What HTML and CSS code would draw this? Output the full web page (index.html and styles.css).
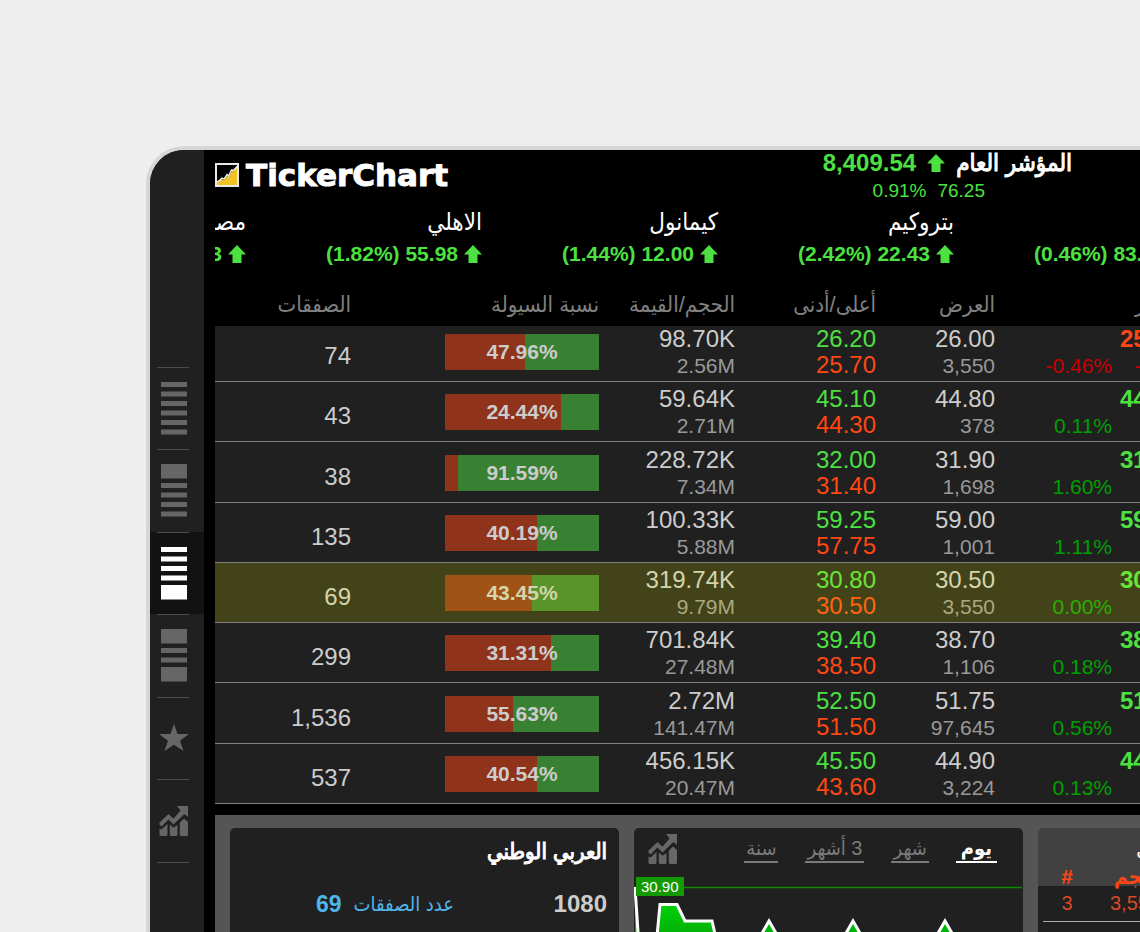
FILE: index.html
```html
<!DOCTYPE html>
<html lang="ar">
<head>
    <meta charset="UTF-8">
    <title>TickerChart</title>
    <link rel="stylesheet" href="styles.css">
</head>
<body>
    <svg class="symbols" width="0" height="0">
        <symbol id="up" viewBox="0 0 18 18">
            <path fill="#4de041" d="M9 0 L18 9.5 H13.5 V18 H4.5 V9.5 H0 Z"/>
        </symbol>
        <symbol id="growth" viewBox="0 0 30 30">
            <path fill="currentColor" d="M18 0 H29 V11 L25.500 8 L14.500 18.500 L9.500 13.500 L2.500 20.500 L0.500 18.500 V16.500 L9.500 8 L14.500 12.800 L21.500 4.500 Z"/>
            <path fill="currentColor" d="M0.500 22.500 L2.500 23.500 L8.500 18 V28.500 Q8.500 30 7 30 H2 Q0.500 30 0.500 28.500 Z M10.800 18.500 L14.500 21.800 L18.500 19 V28.500 Q18.500 30 17 30 H12.300 Q10.800 30 10.800 28.500 Z M20.800 16.500 L25 12.500 L29 16 V28.500 Q29 30 27.500 30 H22.300 Q20.800 30 20.800 28.500 Z"/>
        </symbol>
    </svg>

    <div class="app">
        <nav class="sidebar">
            <a href="#list" aria-label="List">
                <svg width="26" height="53"><path d="M0 0h26v5H0z M0 9.500h26v5H0z M0 19h26v5H0z M0 28.500h26v5H0z M0 38h26v5H0z M0 47.500h26v5H0z"/></svg>
            </a>
            <a href="#top" aria-label="Top panel">
                <svg width="26" height="53"><path d="M0 0h26v14.500H0z M0 19h26v5H0z M0 28.500h26v5H0z M0 38h26v5H0z M0 47.500h26v5H0z"/></svg>
            </a>
            <a href="#bottom" class="active" aria-label="Bottom panel">
                <svg width="26" height="53"><path d="M0 0h26v5H0z M0 9.500h26v5H0z M0 19h26v5H0z M0 28.500h26v5H0z M0 38h26v14.500H0z"/></svg>
            </a>
            <a href="#both" aria-label="Both panels">
                <svg width="26" height="53"><path d="M0 0h26v14.500H0z M0 19h26v5H0z M0 28.500h26v5H0z M0 38h26v14.500H0z"/></svg>
            </a>
            <a href="#favorites" aria-label="Favorites">
                <svg width="30" height="28" viewBox="0 0 30 28"><path d="M15 0 L18.600 10 H30 L21 16.800 L24.500 27 L15 20.800 L5.500 27 L9 16.800 L0 10 H11.400 Z"/></svg>
            </a>
            <a href="#charts" aria-label="Charts">
                <svg width="30" height="30"><use href="#growth"/></svg>
            </a>
        </nav>

        <main class="main">
            <header class="header">
                <div class="logo">
                    <svg width="24" height="24" viewBox="0 0 24 24">
                        <rect x="1" y="1" width="22" height="22" fill="#000" stroke="#e8e8e8" stroke-width="2"/>
                        <path fill="#f0c426" d="M2 22 V19 L5 17.500 L7 16 L9 17 L12 12.500 L13.500 14 L17 8 L18.500 8.500 L22 4 V22 Z"/>
                        <path fill="none" stroke="#fff" stroke-width="1.300" d="M2 19 L5 17 L7 15 L9 16 L12 11.500 L13.500 13 L16.500 7 L18.500 7.500 L22 3.500"/>
                    </svg>
                    <span>TickerChart</span>
                </div>
                <div class="index">
                    <div class="index-value">
                        <b>8,409.54</b>
                        <svg width="18" height="18"><use href="#up"/></svg>
                        <span class="ar ar-bold" dir="rtl">المؤشر العام</span>
                    </div>
                    <div class="index-change"><span>0.91%</span><span>76.25</span></div>
                </div>
            </header>

            <div class="ticker">
                <div class="quote">
                    <div class="ar">مصرف</div>
                    <div class="price">(0.75%) 26.83 <svg width="18" height="18"><use href="#up"/></svg></div>
                </div>
                <div class="quote">
                    <div class="ar">الاهلي</div>
                    <div class="price">(1.82%) 55.98 <svg width="18" height="18"><use href="#up"/></svg></div>
                </div>
                <div class="quote">
                    <div class="ar">كيمانول</div>
                    <div class="price">(1.44%) 12.00 <svg width="18" height="18"><use href="#up"/></svg></div>
                </div>
                <div class="quote">
                    <div class="ar">بتروكيم</div>
                    <div class="price">(2.42%) 22.43 <svg width="18" height="18"><use href="#up"/></svg></div>
                </div>
                <div class="quote">
                    <div class="ar">قطن</div>
                    <div class="price">(0.46%) 83.25 <svg width="18" height="18"><use href="#up"/></svg></div>
                </div>
            </div>

            <table class="market">
                <colgroup>
                    <col class="c-trades"><col class="c-liquidity"><col class="c-volume"><col class="c-range"><col class="c-offer"><col class="c-change"><col>
                </colgroup>
                <thead>
                    <tr>
                        <th>الصفقات</th>
                        <th>نسبة السيولة</th>
                        <th>الحجم/القيمة</th>
                        <th>أعلى/أدنى</th>
                        <th>العرض</th>
                        <th></th>
                        <th>التغير</th>
                    </tr>
                </thead>
                <tbody>
                    <tr>
                        <td class="trades">74</td>
                        <td><div class="bar"><i style="width: 52.04%"></i><b>47.96%</b></div></td>
                        <td>98.70K<small>2.56M</small></td>
                        <td class="range"><span class="up">26.20</span><span class="down">25.70</span></td>
                        <td>26.00<small>3,550</small></td>
                        <td><small class="loss">-0.46%</small></td>
                        <td><b class="down">25.95</b><small class="loss">-0.12</small></td>
                    </tr>
                    <tr>
                        <td class="trades">43</td>
                        <td><div class="bar"><i style="width: 75.56%"></i><b>24.44%</b></div></td>
                        <td>59.64K<small>2.71M</small></td>
                        <td class="range"><span class="up">45.10</span><span class="down">44.30</span></td>
                        <td>44.80<small>378</small></td>
                        <td><small class="gain">0.11%</small></td>
                        <td><b class="up">44.80</b><small class="gain">0.05</small></td>
                    </tr>
                    <tr>
                        <td class="trades">38</td>
                        <td><div class="bar"><i style="width: 8.41%"></i><b>91.59%</b></div></td>
                        <td>228.72K<small>7.34M</small></td>
                        <td class="range"><span class="up">32.00</span><span class="down">31.40</span></td>
                        <td>31.90<small>1,698</small></td>
                        <td><small class="gain">1.60%</small></td>
                        <td><b class="up">31.90</b><small class="gain">0.50</small></td>
                    </tr>
                    <tr>
                        <td class="trades">135</td>
                        <td><div class="bar"><i style="width: 59.81%"></i><b>40.19%</b></div></td>
                        <td>100.33K<small>5.88M</small></td>
                        <td class="range"><span class="up">59.25</span><span class="down">57.75</span></td>
                        <td>59.00<small>1,001</small></td>
                        <td><small class="gain">1.11%</small></td>
                        <td><b class="up">59.00</b><small class="gain">0.65</small></td>
                    </tr>
                    <tr class="selected">
                        <td class="trades">69</td>
                        <td><div class="bar"><i style="width: 56.55%"></i><b>43.45%</b></div></td>
                        <td>319.74K<small>9.79M</small></td>
                        <td class="range"><span class="up">30.80</span><span class="down">30.50</span></td>
                        <td>30.50<small>3,550</small></td>
                        <td><small class="gain">0.00%</small></td>
                        <td><b class="up">30.50</b><small class="gain">0.00</small></td>
                    </tr>
                    <tr>
                        <td class="trades">299</td>
                        <td><div class="bar"><i style="width: 68.69%"></i><b>31.31%</b></div></td>
                        <td>701.84K<small>27.48M</small></td>
                        <td class="range"><span class="up">39.40</span><span class="down">38.50</span></td>
                        <td>38.70<small>1,106</small></td>
                        <td><small class="gain">0.18%</small></td>
                        <td><b class="up">38.70</b><small class="gain">0.07</small></td>
                    </tr>
                    <tr>
                        <td class="trades">1,536</td>
                        <td><div class="bar"><i style="width: 44.37%"></i><b>55.63%</b></div></td>
                        <td>2.72M<small>141.47M</small></td>
                        <td class="range"><span class="up">52.50</span><span class="down">51.50</span></td>
                        <td>51.75<small>97,645</small></td>
                        <td><small class="gain">0.56%</small></td>
                        <td><b class="up">51.75</b><small class="gain">0.29</small></td>
                    </tr>
                    <tr>
                        <td class="trades">537</td>
                        <td><div class="bar"><i style="width: 59.46%"></i><b>40.54%</b></div></td>
                        <td>456.15K<small>20.47M</small></td>
                        <td class="range"><span class="up">45.50</span><span class="down">43.60</span></td>
                        <td>44.90<small>3,224</small></td>
                        <td><small class="gain">0.13%</small></td>
                        <td><b class="up">44.85</b><small class="gain">0.06</small></td>
                    </tr>
                </tbody>
            </table>

            <div class="panels">
                <section class="panel details" dir="rtl">
                    <h2 class="ar ar-bold">العربي الوطني</h2>
                    <div class="facts">
                        <b>1080</b>
                        <div class="count"><span>عدد الصفقات</span><b>69</b></div>
                    </div>
                </section>

                <section class="panel">
                    <div class="tabs" dir="rtl">
                        <button type="button" class="active">يوم</button>
                        <button type="button">شهر</button>
                        <button type="button">3 أشهر</button>
                        <button type="button">سنة</button>
                        <svg width="30" height="30"><use href="#growth"/></svg>
                    </div>
                    <div class="chart">
                        <svg width="388" height="70">
                            <defs>
                                <linearGradient id="fill" x1="0" y1="0" x2="0" y2="1">
                                    <stop offset="0" stop-color="#00e60a"/>
                                    <stop offset="1" stop-color="#048a04"/>
                                </linearGradient>
                            </defs>
                            <path stroke="#0c8a00" stroke-width="1.500" d="M0 10.500 H388"/>
                            <path fill="url(#fill)" stroke="#fff" stroke-width="3" d="M1 10 L5 70 L22 70 L26 27.500 H43 L51 44 H78 L84 70 H120 L135 44 L150 70 H204 L219 44 L234 70 H296 L311 44 L326 70 H388 V90 H1"/>
                        </svg>
                        <span class="level">30.90</span>
                    </div>
                </section>

                <section class="panel depth">
                    <h3 class="ar">الطلب</h3>
                    <table>
                        <thead>
                            <tr><th>#</th><th class="volume">حجم</th><th></th></tr>
                        </thead>
                        <tbody>
                            <tr><td>3</td><td>3,550</td><td></td></tr>
                            <tr><td>1</td><td>1,200</td><td></td></tr>
                        </tbody>
                    </table>
                </section>
            </div>
        </main>
    </div>
</body>
</html>
```
FILE: styles.css
```css
* {
    box-sizing: border-box;
}

body {
    margin: 0;
    height: 100vh;
    overflow: hidden;
    display: flex;
    background-color: #eeeeee;
    color: #cccccc;
    font-family: "Liberation Sans", "DejaVu Sans Condensed", "DejaVu Sans", Arial, sans-serif;
}

h2, h3 {
    margin: 0;
}

.symbols {
    position: absolute;
}

/* the window runs off the right and bottom edges of the page */
.app {
    flex: 1;
    min-width: 0;
    display: flex;
    margin: 146px -51px 0 146px;
    border: solid #d6d6d6;
    border-width: 4px 0 0 4px;
    border-radius: 38px 0 0 0;
    background-color: #000000;
    overflow: hidden;
}

/* sidebar */
.sidebar {
    flex: 0 0 54px;
    padding-top: 217px;
    background-color: #202020;
}

.sidebar a {
    display: flex;
    align-items: center;
    justify-content: center;
    height: 82px;
    padding-right: 6px;
    color: #666666;
    background: linear-gradient(#4c4c4c, #4c4c4c) 7px 0 / 32px 1px no-repeat;
}

.sidebar a:nth-child(even) {
    height: 83px;
}

.sidebar a:last-child {
    height: 84px;
    background: linear-gradient(#4c4c4c, #4c4c4c) 7px 0 / 32px 1px no-repeat, linear-gradient(#4c4c4c, #4c4c4c) 7px 100% / 32px 1px no-repeat;
}

.sidebar a.active {
    color: #ffffff;
    background-color: #121212;
}

.sidebar svg {
    fill: currentColor;
}

/* top of the window */
.main {
    flex: 1;
    min-width: 0;
    margin-left: 11px;
}

.header {
    display: flex;
    justify-content: space-between;
    height: 56px;
}

.logo {
    display: flex;
    align-items: center;
    gap: 7px;
    height: 50px;
    color: #ffffff;
    font-family: "DejaVu Sans", sans-serif;
    font-size: 31px;
    font-weight: bold;
    -webkit-text-stroke: 1px #ffffff;
}

.ar {
    color: #ffffff;
    font-size: 24px;
    font-weight: normal;
}

.ar-bold {
    -webkit-text-stroke: 1px #ffffff;
}

.index {
    padding-right: 119px;
    color: #4de041;
    font-size: 24px;
    line-height: 28px;
}

.index-value {
    display: flex;
    align-items: center;
    justify-content: flex-end;
    gap: 11px;
    height: 26px;
}

.index-change {
    display: flex;
    justify-content: flex-end;
    gap: 11px;
    padding-right: 87px;
    font-size: 19px;
    line-height: 30px;
}

.ticker {
    display: flex;
    justify-content: flex-end;
    overflow: hidden;
}

.quote {
    flex: 0 0 236px;
    height: 64px;
    padding-right: 1px;
    text-align: right;
    line-height: 32px;
}

.quote .ar {
    height: 32px;
}

.price {
    display: flex;
    align-items: center;
    justify-content: flex-end;
    gap: 6px;
    color: #4de041;
    font-size: 21px;
    font-weight: bold;
    white-space: nowrap;
}

/* market table */
.market {
    width: 100%;
    table-layout: fixed;
    border-spacing: 0;
}

.c-trades, .c-volume {
    width: 136px;
}

.c-liquidity {
    width: 248px;
}

.c-range {
    width: 141px;
}

.c-offer {
    width: 119px;
}

.c-change {
    width: 117px;
}

.market th {
    height: 56px;
    padding: 14px 0 0;
    color: #808080;
    font-size: 22px;
    font-weight: normal;
    line-height: 42px;
    text-align: right;
    white-space: nowrap;
}

.market td {
    height: 60px;
    padding: 0 0 1px;
    border-bottom: 1px solid #808080;
    background-color: #202020;
    font-size: 24px;
    line-height: 26px;
    text-align: right;
    vertical-align: bottom;
}

.market tr:first-child td {
    height: 56px;
}

.market tr:nth-child(4n+3) td {
    height: 61px;
}

.market small {
    display: block;
    color: #999999;
    font-size: 21px;
    line-height: 28px;
}

.market th:last-child {
    padding-left: 23px;
    text-align: left;
}

.market td:last-child {
    padding-left: 8px;
    text-align: left;
}

.market td:last-child small {
    padding-left: 20px;
}

.market td:last-child .loss {
    padding-left: 14px;
}

.market td.trades {
    padding-bottom: 12px;
}

.market td.range {
    padding-bottom: 3px;
}

.range span {
    display: block;
}

.market .up {
    color: #4de041;
}

.market .down {
    color: #ff4713;
}

.market .gain {
    color: #009f00;
}

.market .loss {
    color: #c80000;
}

.bar {
    display: grid;
    width: 154px;
    height: 36px;
    margin: 0 0 10px auto;
    background-color: #388032;
}

.bar i, .bar b {
    grid-area: 1 / 1;
}

.bar i {
    background-color: #8f331b;
}

.bar b {
    font-size: 21px;
    line-height: 36px;
    text-align: center;
}

.market .selected {
    position: relative;
}

.selected::after {
    content: "";
    position: absolute;
    inset: 0 0 1px;
    background-color: rgba(255, 255, 0, 0.16);
}

/* bottom panels */
.panels {
    display: grid;
    grid-template-columns: repeat(3, 389px);
    gap: 15px;
    height: 400px;
    margin-top: 11px;
    padding: 13px 15px;
    background-color: #555555;
}

.panel {
    border-radius: 5px;
    background-color: #202020;
    overflow: hidden;
}

.details {
    padding: 8px 12px;
}

.details h2 {
    font-size: 22px;
    line-height: 32px;
}

.facts {
    display: flex;
    justify-content: space-between;
    padding: 20px 0 0 74px;
    font-size: 24px;
    line-height: 32px;
}

.count {
    display: flex;
    gap: 12px;
    color: #4fb5ea;
}

.count span {
    font-size: 20px;
}

.count b {
    font-size: 23px;
}

.tabs {
    display: flex;
    align-items: center;
    gap: 27px;
    height: 49px;
    padding: 0 26px 7px 14px;
}

.tabs button {
    height: 28px;
    padding: 0 2px;
    border: 0;
    border-bottom: 2px solid #7a7a7a;
    background: none;
    color: #7a7a7a;
    font-family: inherit;
    font-size: 20px;
    line-height: 26px;
    white-space: nowrap;
    cursor: pointer;
}

.tabs button.active {
    padding: 0 5px;
    color: #ffffff;
    border-color: #ffffff;
    font-weight: bold;
}

.tabs svg {
    margin-right: auto;
    color: #666666;
}

.chart {
    position: relative;
}

.chart svg {
    display: block;
}

.level {
    position: absolute;
    top: 0;
    left: 2px;
    padding: 0 5px;
    background-color: #129a00;
    color: #ffffff;
    font-size: 15px;
    line-height: 19px;
}

.depth {
    padding: 0 5px;
    background: linear-gradient(#414141 58px, #202020 58px);
}

.depth h3 {
    padding: 7px 0 0 93px;
    line-height: 32px;
}

.depth table {
    width: 100%;
    border-spacing: 0;
    table-layout: fixed;
    color: #d84a26;
    font-size: 20px;
    text-align: center;
}

.depth th {
    width: 48px;
    height: 19px;
    padding: 0;
    color: #ff4713;
    font-size: 21px;
    line-height: 19px;
}

.depth th.volume {
    width: 88px;
}

.depth th:last-child {
    width: auto;
}

.depth td {
    height: 36px;
    padding: 0;
    border-bottom: 1px solid #aaaaaa;
}
```
